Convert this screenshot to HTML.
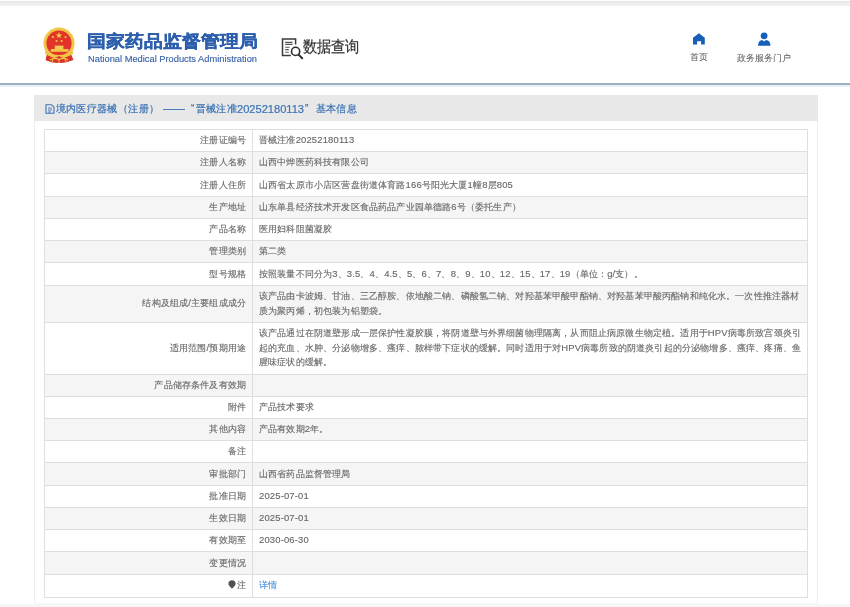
<!DOCTYPE html>
<html><head><meta charset="utf-8">
<style>
*{margin:0;padding:0;box-sizing:border-box}
.wrap{position:absolute;left:0;top:0;width:850px;height:607px;will-change:transform;background:#fff}
html,body{width:850px;height:607px;overflow:hidden;background:#fff;font-family:"Liberation Sans",sans-serif;}
.topbar{position:absolute;left:0;top:1px;width:850px;height:5px;background:linear-gradient(#e3e3e3,#ededed 40%,#f1f1f1)}
.header{position:absolute;left:0;top:6px;width:850px;height:77px;background:#fff}
.hline{position:absolute;left:0;top:83px;width:850px;height:2px;background:#9db2c1}
.hline2{position:absolute;left:0;top:85px;width:850px;height:2px;background:#e6f2f9}
.emblem{position:absolute;left:38px;top:24px;width:44px;height:44px}
.t1{position:absolute;left:87px;top:31px;font-size:19px;font-weight:bold;color:#2d5fac;white-space:nowrap;line-height:22px;-webkit-text-stroke:0.4px #2d5fac;transform:scaleY(0.9);transform-origin:0 52%}
.t2{position:absolute;left:88px;top:54px;font-size:9.3px;color:#3a64a8;-webkit-text-stroke:0.15px #3a64a8;white-space:nowrap;line-height:11px}
.sq{position:absolute;left:278px;top:34.6px;width:30px;height:26px}
.sqt{position:absolute;left:303px;top:36px;font-size:14px;color:#333;white-space:nowrap;line-height:18px;transform:scaleY(1.12);transform-origin:0 0;-webkit-text-stroke:0.2px #333}
.nav{position:absolute;top:33px;text-align:center;font-size:9px;color:#555;white-space:nowrap;line-height:12px}
.nav svg{display:block;margin:0 auto}
.panel{position:absolute;left:34px;top:95px;width:784px;height:509px;background:#fff;border:1px solid #eee;border-top:none;border-bottom-color:#f6f6f6}
.foot{position:absolute;left:0;top:604px;width:850px;height:3px;background:#f7f7f7}
.phead{position:absolute;left:34px;top:95px;width:784px;height:26px;background:#e8e8e8}
.ptitle{position:absolute;top:102px;font-size:10px;color:#3b72b5;white-space:nowrap;line-height:14px;-webkit-text-stroke:0.2px #3b72b5}
table{position:absolute;left:44px;top:129px;width:764px;border-collapse:collapse;font-size:9.45px;color:#606060;letter-spacing:0.16px;-webkit-text-stroke:0.15px #808080}
td{border:1px solid #dedede;line-height:14.8px;padding:3.22px 6px;vertical-align:middle}
td.l{width:208px;text-align:right;color:#606060}
tr:nth-child(even) td{background:#f5f5f5}
a{color:#3f8ee0;text-decoration:none;-webkit-text-stroke:0.15px #5a9fe6}
tr.last td{padding-top:3.8px;padding-bottom:3.8px}
</style></head><body>
<div class="wrap">
<div class="topbar"></div>
<div class="header"></div>
<div class="hline"></div><div class="hline2"></div>
<svg class="emblem" viewBox="0 0 44 44">
  <path d="M9 30 L7.5 36 Q21 41 35.5 36 L33 30 Z" fill="#d8342a"/>
  <circle cx="21" cy="19.2" r="15.6" fill="#f1c548"/>
  <circle cx="21" cy="19.2" r="12.6" fill="#e3342a"/>
  <polygon points="21,8 21.8,10.4 24.3,10.4 22.3,11.9 23,14.3 21,12.8 19,14.3 19.7,11.9 17.7,10.4 20.2,10.4" fill="#f6d54a"/>
  <circle cx="14.9" cy="13" r="1.1" fill="#f3c846"/><circle cx="27.5" cy="13" r="1.1" fill="#f3c846"/>
  <circle cx="18.6" cy="17" r="1.1" fill="#f3c846"/><circle cx="23.6" cy="17" r="1.1" fill="#f3c846"/>
  <rect x="16.8" y="21.6" width="8.6" height="3.6" fill="#f3cc55"/>
  <rect x="12.8" y="25" width="17.6" height="2.8" fill="#f1c548"/>
  <path d="M7 27 Q21 35 35 27 L35 30 Q21 38 7 30 Z" fill="#f1c548"/>
  <path d="M9.5 31.5 Q15 36 21 32 Q27 36 32.5 31.5 L33.5 36.5 Q21 41.5 8.5 36.5 Z" fill="#d8342a"/>
  <path d="M12 36 Q16 33 21 35.5 Q26 33 30 36" stroke="#f1c548" stroke-width="1.2" fill="none"/>
  <path d="M14 38.3 L15 35.5 M28 38.3 L27 35.5 M21 39 V36" stroke="#f1c548" stroke-width="1" fill="none"/>
</svg>
<div class="t1">国家药品监督管理局</div>
<div class="t2">National Medical Products Administration</div>
<svg class="sq" viewBox="0 0 30 26">
  <path d="M17.6 9.6 V4.1 H4.5 V20.6 H12.8" fill="none" stroke="#3a3a3a" stroke-width="1.5"/>
  <path d="M7.2 7.4 H14.6 M7.2 9.4 H14.6 M7.2 12.2 H11.6 M7.2 14.6 H10.8 M7.2 17.2 H10.8" stroke="#555" stroke-width="1.1"/>
  <circle cx="17.6" cy="16.4" r="4.1" fill="#fff" stroke="#2e2e2e" stroke-width="1.6"/>
  <path d="M20.6 19.6 L24.2 23.2" stroke="#2e2e2e" stroke-width="2" stroke-linecap="round"/>
</svg>
<div class="sqt">数据查询</div>
<div class="nav" style="left:689px;width:20px">
  <svg width="12" height="12" viewBox="0 0 12 12" style="margin-left:4px;margin-top:0.3px"><path d="M5.9 0.2 L11.8 4.8 L11.8 11.5 L8.1 11.5 L8.1 8.3 L4.1 8.3 L4.1 11.5 L0 11.5 L0 4.8 Z" fill="#1760ba"/></svg>
  <div style="margin-top:6px">首页</div>
</div>
<div class="nav" style="left:734px;width:60px">
  <svg width="14" height="14" viewBox="0 0 14 14" style="margin-top:-1px"><circle cx="7.1" cy="3.8" r="3.4" fill="#1760ba"/><path d="M1 13.8 Q1.3 8.3 5.3 8 L7.1 9.6 L8.9 8 Q13.2 8.3 13.5 13.8 Z" fill="#1760ba"/></svg>
  <div style="margin-top:6px">政务服务门户</div>
</div>

<div class="foot"></div>
<div class="panel"></div>
<div class="phead"></div>
<svg style="position:absolute;left:45px;top:104px" width="10" height="10" viewBox="0 0 10 10"><path d="M1 0.7 H6.5 L9 3 V9.3 H1 Z" fill="none" stroke="#3b72b5" stroke-width="1.1"/><path d="M3 4 H7 M3 6 H7 M3 8 H6" stroke="#3b72b5" stroke-width="0.9"/></svg>
<div class="ptitle" style="left:55.5px;font-size:10px;letter-spacing:0.4px">境内医疗器械</div>
<div class="ptitle" style="left:118px;font-size:10px;letter-spacing:0.4px">（注册）</div>
<div style="position:absolute;left:163px;top:108.5px;width:22px;height:1.2px;background:#4a7dbb"></div>
<div class="ptitle" style="left:191px">“</div>
<div class="ptitle" style="left:196px;font-size:10px;letter-spacing:0.2px">晋械注准</div>
<div class="ptitle" style="left:237px;font-size:11.1px">20252180113</div>
<div class="ptitle" style="left:305px">”</div>
<div class="ptitle" style="left:315.5px;font-size:10px;letter-spacing:0.4px">基本信息</div>

<table>
<tr><td class="l">注册证编号</td><td>晋械注准20252180113</td></tr>
<tr><td class="l">注册人名称</td><td>山西中烨医药科技有限公司</td></tr>
<tr><td class="l">注册人住所</td><td>山西省太原市小店区营盘街道体育路166号阳光大厦1幢8层805</td></tr>
<tr><td class="l">生产地址</td><td>山东单县经济技术开发区食品药品产业园单德路6号（委托生产）</td></tr>
<tr><td class="l">产品名称</td><td>医用妇科阻菌凝胶</td></tr>
<tr><td class="l">管理类别</td><td>第二类</td></tr>
<tr><td class="l">型号规格</td><td>按照装量不同分为3、3.5、4、4.5、5、6、7、8、9、10、12、15、17、19（单位：g/支）。</td></tr>
<tr><td class="l">结构及组成/主要组成成分</td><td>该产品由卡波姆、甘油、三乙醇胺、依地酸二钠、磷酸氢二钠、对羟基苯甲酸甲酯钠、对羟基苯甲酸丙酯钠和纯化水。一次性推注器材<br>质为聚丙烯，初包装为铝塑袋。</td></tr>
<tr><td class="l">适用范围/预期用途</td><td>该产品通过在阴道壁形成一层保护性凝胶膜，将阴道壁与外界细菌物理隔离，从而阻止病原微生物定植。适用于HPV病毒所致宫颈炎引<br>起的充血、水肿、分泌物增多、瘙痒、脓样带下症状的缓解。同时适用于对HPV病毒所致的阴道炎引起的分泌物增多、瘙痒、疼痛、鱼<br>腥味症状的缓解。</td></tr>
<tr><td class="l">产品储存条件及有效期</td><td></td></tr>
<tr><td class="l">附件</td><td>产品技术要求</td></tr>
<tr><td class="l">其他内容</td><td>产品有效期2年。</td></tr>
<tr><td class="l">备注</td><td></td></tr>
<tr><td class="l">审批部门</td><td>山西省药品监督管理局</td></tr>
<tr><td class="l">批准日期</td><td>2025-07-01</td></tr>
<tr><td class="l">生效日期</td><td>2025-07-01</td></tr>
<tr><td class="l">有效期至</td><td>2030-06-30</td></tr>
<tr><td class="l">变更情况</td><td></td></tr>
<tr class="last"><td class="l"><svg width="8" height="9" viewBox="0 0 8 9" style="vertical-align:-1px;margin-right:0.5px"><path d="M4 0.3 C6.2 0.3 7.6 1.8 7.6 3.7 C7.6 5.6 5.6 7 4 8.8 C2.4 7 0.4 5.6 0.4 3.7 C0.4 1.8 1.8 0.3 4 0.3 Z" fill="#505050"/></svg>注</td><td><a>详情</a></td></tr>
</table>
</div>
</body></html>
